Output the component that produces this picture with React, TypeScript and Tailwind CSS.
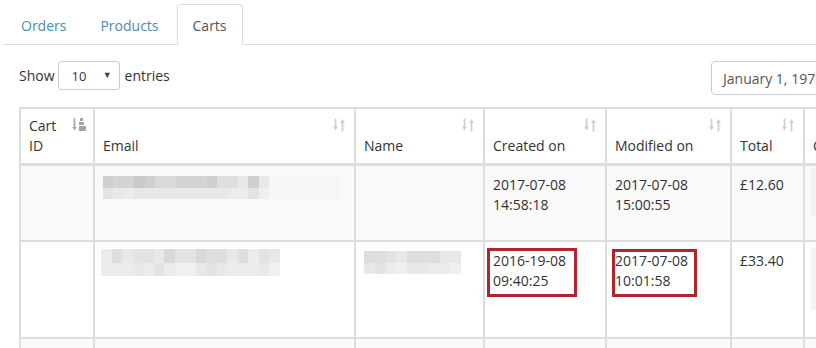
import React from "react";

const shades = [
  "bg-[#c9c9c9]",
  "bg-[#cfcfcf]",
  "bg-[#d4d4d4]",
  "bg-[#d9d9d9]",
  "bg-[#dedede]",
  "bg-[#e3e3e3]",
  "bg-[#e8e8e8]",
  "bg-[#ececec]",
  "bg-[#f0f0f0]",
];

// pixelated (blurred) placeholders for hidden personal data
function Mosaic({ top, bottom, block, h1, h2 }: { top: number[]; bottom: number[]; block: string; h1: string; h2: string }) {
  return (
    <div className="flex flex-col">
      <div className={"flex " + h1}>
        {top.map((s, i) => (
          <div key={i} className={block + " " + shades[s]} />
        ))}
      </div>
      <div className={"flex " + h2}>
        {bottom.map((s, i) => (
          <div key={i} className={block + " " + shades[s]} />
        ))}
      </div>
    </div>
  );
}

function SortIcon() {
  return (
    <svg width="14" height="14" viewBox="0 0 14 14" className="text-[#cfcfcf]">
      <path d="M3.5 0.5v9" stroke="currentColor" strokeWidth="1.8" />
      <path d="M1 8.5h5l-2.5 4z" fill="currentColor" />
      <path d="M10.5 4v9.5" stroke="currentColor" strokeWidth="1.8" />
      <path d="M8 5h5l-2.5-4z" fill="currentColor" />
    </svg>
  );
}

function SortAscIcon() {
  return (
    <svg width="14" height="14" viewBox="0 0 14 14" className="text-[#a3a3a3]">
      <path d="M2.5 0v10" stroke="currentColor" strokeWidth="1.6" />
      <path d="M0.3 9h4.4l-2.2 3.5z" fill="currentColor" />
      <rect x="8" y="0" width="3" height="3" fill="currentColor" />
      <rect x="7" y="4" width="5" height="3" fill="currentColor" />
      <rect x="7" y="8" width="7" height="5" fill="currentColor" />
    </svg>
  );
}

function Th({ children, icon = "sort" }: { children: React.ReactNode; icon?: "sort" | "asc" | "none" }) {
  return (
    <div className="relative bg-white border-b border-[#dddddd] flex flex-col justify-end px-[8px] pb-[7px] leading-[20px] whitespace-nowrap overflow-hidden">
      {children}
      {icon === "sort" && (
        <div className="absolute top-[9px] right-[8px]">
          <SortIcon />
        </div>
      )}
      {icon === "asc" && (
        <div className="absolute top-[9px] right-[7px]">
          <SortAscIcon />
        </div>
      )}
    </div>
  );
}

function Td({ children, striped }: { children?: React.ReactNode; striped?: boolean }) {
  return (
    <div className={"relative px-[8px] pt-[9px] leading-[20px] whitespace-nowrap " + (striped ? "bg-[#f9f9f9]" : "bg-white")}>
      {children}
    </div>
  );
}

export default function App() {
  const tabs = [
    { label: "Orders", active: false },
    { label: "Products", active: false },
    { label: "Carts", active: true },
  ];

  return (
    <div className="w-[816px] h-[348px] overflow-hidden bg-white font-['Open_Sans',sans-serif] text-[14px] text-[#333333]">
      {/* Tabs */}
      <div className="pt-[4px] pl-[4px]">
        <div className="flex border-b border-[#dddddd] h-[41px]">
          {tabs.map((t, i) => (
            <div
              key={t.label}
              className={[
                "h-[41px] px-[15px] pt-[11px] leading-[20px] border rounded-t-[4px] mr-[2px]",
                i === 0 ? "ml-[1px]" : "",
                t.active
                  ? "bg-white border-[#dddddd] border-b-white text-[#555555]"
                  : "border-transparent text-[#4b8cae]",
              ].join(" ")}
            >
              {t.label}
            </div>
          ))}
        </div>
      </div>

      {/* Length + date filter */}
      <div className="mt-[16px] flex items-start w-[861px] pl-[19px]">
        <div className="flex items-center h-[29px]">
          <span>Show</span>
          <div className="ml-[3px] w-[62px] h-[29px] border border-[#cccccc] rounded-[3px] flex items-center justify-between pl-[13px] pr-[7px]">
            <span className="text-[13px] mt-[3px]">10</span>
            <span className="text-[9px] text-[#444444] -mt-[1px]">▼</span>
          </div>
          <span className="ml-[5px]">entries</span>
        </div>
        <div className="flex-1" />
        <div className="w-[150px] h-[34px] border border-[#cccccc] rounded-[4px] pl-[11px] flex items-center whitespace-nowrap text-[#555555] overflow-hidden">
          January 1, 1970 - July 8, 2017
        </div>
      </div>

      {/* Table */}
      <div className="mt-[12px] ml-[19px] inline-grid bg-[#dddddd] p-[2px] gap-[2px] grid-cols-[72px_259px_127px_120px_123px_71px_200px] grid-rows-[55px_74px_95px_60px]">
        <Th icon="asc">
          <span>Cart</span>
          <span>ID</span>
        </Th>
        <Th>Email</Th>
        <Th>Name</Th>
        <Th>Created on</Th>
        <Th>Modified on</Th>
        <Th>Total</Th>
        <Th icon="none">Customer</Th>

        {/* row 1 */}
        <Td striped />
        <Td striped>
          <div className="mt-[1px] flex">
            <Mosaic
              block="w-[10.4px]"
              h1="h-[12px]"
              h2="h-[11px]"
              top={[1, 2, 2, 0, 1, 3, 3, 2, 2, 2, 1, 4, 4, 6, 1, 6]}
              bottom={[5, 6, 7, 6, 6, 6, 6, 6, 6, 6, 6, 6, 7, 7, 5, 8]}
            />
            <div className="w-[72px] h-[23px] bg-[#f6f6f6]" />
          </div>
        </Td>
        <Td striped />
        <Td striped>
          <div>2017-07-08</div>
          <div>14:58:18</div>
        </Td>
        <Td striped>
          <div>2017-07-08</div>
          <div>15:00:55</div>
        </Td>
        <Td striped>£12.60</Td>
        <Td striped>
          <div className="-ml-[2px] mt-[-6px] w-[120px] h-[46px] bg-[#f2f2f2]" />
        </Td>

        {/* row 2 */}
        <Td />
        <Td>
          <div className="-ml-[2px] -mt-[2px]">
            <Mosaic
              block="w-[10.5px]"
              h1="h-[14px]"
              h2="h-[13px]"
              top={[7, 4, 6, 5, 5, 6, 3, 5, 5, 3, 4, 4, 6, 4, 7, 5, 6]}
              bottom={[7, 7, 7, 6, 7, 5, 7, 8, 8, 6, 5, 6, 7, 7, 7, 6, 8]}
            />
          </div>
        </Td>
        <Td>
          <div>
            <Mosaic
              block="w-[10.8px]"
              h1="h-[12px]"
              h2="h-[11px]"
              top={[4, 4, 5, 6, 4, 4, 4, 6, 6]}
              bottom={[6, 5, 7, 8, 6, 6, 7, 7, 8]}
            />
          </div>
        </Td>
        <Td>
          <div>2016-19-08</div>
          <div>09:40:25</div>
          <div className="absolute left-[2px] top-[6px] w-[90px] h-[49px] border-[3px] border-[#b1262e]" />
        </Td>
        <Td>
          <div>2017-07-08</div>
          <div>10:01:58</div>
          <div className="absolute left-[5px] top-[7px] w-[85px] h-[48px] border-[3px] border-[#b1262e]" />
        </Td>
        <Td>£33.40</Td>
        <Td>
          <div className="-ml-[2px] -mt-[3px] w-[120px] h-[62px] bg-[#f4f4f4]" />
        </Td>

        {/* row 3 */}
        <Td striped />
        <Td striped />
        <Td striped />
        <Td striped />
        <Td striped />
        <Td striped />
        <Td striped />
      </div>
    </div>
  );
}
